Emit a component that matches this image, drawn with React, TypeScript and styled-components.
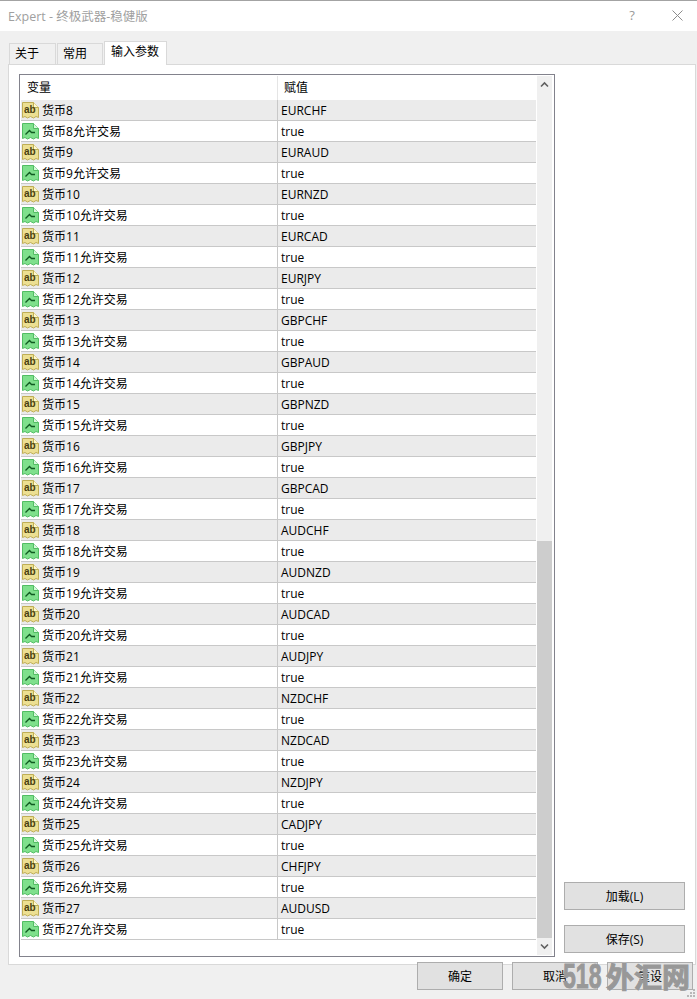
import React from 'react'
import styled, { createGlobalStyle } from 'styled-components'

const GlobalStyle = createGlobalStyle`
  html, body {
    margin: 0;
    padding: 0;
    background: #f0f0f0;
  }
  * {
    box-sizing: border-box;
  }
`

const FONT = `"Open Sans", "Noto Sans CJK SC", sans-serif`

const Dialog = styled.div`
  position: relative;
  width: 697px;
  height: 999px;
  overflow: hidden;
  background: #f0f0f0;
  color: #000;
  font-family: ${FONT};
  font-size: 12px;
`
const TitleBar = styled.div`
  height: 31px;
  background: #fff;
  border-top: 1px solid #a3a3a3;
  display: flex;
  align-items: center;
  padding: 0 14px 2px 8px;
  color: #a0a0a0;
  font-size: 12.5px;
`
const TitleText = styled.div`
  flex: 1;
`
const TitleHelp = styled.div`
  width: 10px;
  margin-right: 35px;
  font-size: 13px;
  color: #9a9a9a;
  text-align: center;
`
const Tabs = styled.div`
  display: flex;
  align-items: flex-end;
  height: 34px;
  padding-left: 9px;
  margin-bottom: -1px;
  position: relative;
`
const Tab = styled.div<{ $active?: boolean; $width: number }>`
  width: ${(p) => p.$width}px;
  height: ${(p) => (p.$active ? 24 : 22)}px;
  margin-right: 1px;
  padding-left: ${(p) => (p.$active ? 6 : 5)}px;
  padding-top: 1px;
  line-height: 18px;
  background: ${(p) => (p.$active ? '#fff' : '#f0f0f0')};
  border: 1px solid #d9d9d9;
  border-bottom: ${(p) => (p.$active ? 'none' : '1px solid #d9d9d9')};
  position: relative;
  z-index: ${(p) => (p.$active ? 1 : 0)};
`
const Panel = styled.div`
  width: 688px;
  height: 901px;
  margin-left: 8px;
  background: #fff;
  border: 1px solid #d9d9d9;
  padding: 9px 10px;
  display: flex;
  align-items: flex-start;
  gap: 9px;
`
const ListBox = styled.div`
  width: 536px;
  height: 883px;
  border: 1px solid #82828c;
  padding: 1px 2px 1px 1px;
  display: flex;
  background: #fff;
`
const Table = styled.div`
  width: 516px;
  display: flex;
  flex-direction: column;
`
const Header = styled.div`
  height: 24px;
  flex: none;
  display: grid;
  grid-template-columns: 257px 1fr;
  line-height: 23px;
`
const HeaderCell = styled.div<{ $first?: boolean }>`
  padding-left: 6px;
  border-right: ${(p) => (p.$first ? '1px solid #e5e5e5' : 'none')};
`
const Row = styled.div<{ $odd: boolean }>`
  height: 21px;
  flex: none;
  display: grid;
  grid-template-columns: 257px 1fr;
  background: ${(p) => (p.$odd ? '#ebebeb' : '#fff')};
  border-bottom: 1px solid #c8c8c8;
`
const NameCell = styled.div`
  display: flex;
  align-items: flex-start;
  padding: 1px 0 0 1px;
  gap: 3px;
  border-right: 1px solid #c8c8c8;
  line-height: 19px;
`
const ValueCell = styled.div`
  padding: 1px 0 0 3px;
  line-height: 19px;
`
const IconSvg = styled.svg`
  width: 17px;
  height: 17px;
  margin-top: 1px;
  flex: none;
`
const AbLabel = styled.text`
  font-family: "Liberation Sans", sans-serif;
  font-size: 10px;
  font-weight: 700;
  fill: #4a3f10;
`
const ScrollBar = styled.div`
  width: 15px;
  margin-left: 1px;
  display: flex;
  flex-direction: column;
  background: #f0f0f0;
`
const ScrollButton = styled.div`
  height: 17px;
  flex: none;
  display: flex;
  align-items: center;
  justify-content: center;
`
const ScrollTrack = styled.div`
  flex: 1;
  display: flex;
  flex-direction: column;
  justify-content: flex-end;
`
const ScrollThumb = styled.div`
  height: 397px;
  background: #cdcdcd;
`
const SideButtons = styled.div`
  width: 121px;
  height: 879px;
  display: flex;
  flex-direction: column;
  justify-content: flex-end;
  gap: 15px;
`
const Button = styled.div<{ $width: number }>`
  width: ${(p) => p.$width}px;
  height: 28px;
  flex: none;
  background: #e1e1e1;
  border: 1px solid #adadad;
  display: flex;
  align-items: center;
  justify-content: center;
`
const Footer = styled.div`
  display: flex;
  gap: 9px;
  margin-top: -3px;
  padding-left: 417px;
  position: relative;
`
const Watermark = styled.div`
  position: absolute;
  left: 563px;
  top: 958px;
  display: flex;
  align-items: center;
  height: 36px;
  font-family: "Noto Sans CJK SC", "Liberation Sans", sans-serif;
  font-size: 28px;
  font-weight: 700;
  color: #989898;
  -webkit-text-stroke: 1px #989898;
  text-shadow: 0 0 2px rgba(255, 255, 255, 0.8);
  white-space: nowrap;
`
const WatermarkDigits = styled.span`
  display: inline-block;
  width: 43px;
  font-family: "Liberation Sans", sans-serif;
  font-size: 35px;
  transform: scaleX(0.66);
  transform-origin: left center;
`
const Grip = styled.svg`
  position: absolute;
  right: 1px;
  bottom: 1px;
  width: 11px;
  height: 11px;
`

const pairs: [number, string][] = [
  [8, 'EURCHF'], [9, 'EURAUD'], [10, 'EURNZD'], [11, 'EURCAD'], [12, 'EURJPY'],
  [13, 'GBPCHF'], [14, 'GBPAUD'], [15, 'GBPNZD'], [16, 'GBPJPY'], [17, 'GBPCAD'],
  [18, 'AUDCHF'], [19, 'AUDNZD'], [20, 'AUDCAD'], [21, 'AUDJPY'], [22, 'NZDCHF'],
  [23, 'NZDCAD'], [24, 'NZDJPY'], [25, 'CADJPY'], [26, 'CHFJPY'], [27, 'AUDUSD'],
]

const PAGE = 'M0.5 0.5H11.5L16.5 5.5V15.5L14 14.5L11.5 16L8.5 14.5L5.5 16L3 14.5L0.5 15.5Z'

const TextIcon = () => (
  <IconSvg viewBox="0 0 17 17">
    <path d={PAGE} fill="#ecdf92" stroke="#bfae55" />
    <path d="M11.5 0.5V5.5H16.5" fill="#fff8d0" stroke="#bfae55" />
    <AbLabel x="2" y="11">ab</AbLabel>
  </IconSvg>
)

const BoolIcon = () => (
  <IconSvg viewBox="0 0 17 17">
    <path d={PAGE} fill="#7fe08c" stroke="#52bd63" />
    <path d="M11.5 0.5V5.5H16.5" fill="#d8f8dc" stroke="#52bd63" />
    <path d="M3.5 11.5L7.5 7.5L9.5 9.5H13" fill="none" stroke="#0f5a20" strokeWidth="1.3" />
  </IconSvg>
)

export default function App() {
  return (
    <Dialog>
      <GlobalStyle />
      <TitleBar>
        <TitleText>Expert - 终极武器-稳健版</TitleText>
        <TitleHelp>?</TitleHelp>
        <svg width="11" height="11" viewBox="0 0 11 11">
          <path d="M0.5 0.5L10.5 10.5M10.5 0.5L0.5 10.5" stroke="#8c8c8c" fill="none" />
        </svg>
      </TitleBar>
      <Tabs>
        <Tab $width={47}>关于</Tab>
        <Tab $width={46}>常用</Tab>
        <Tab $active $width={63}>输入参数</Tab>
      </Tabs>
      <Panel>
        <ListBox>
          <Table>
            <Header>
              <HeaderCell $first>变量</HeaderCell>
              <HeaderCell>赋值</HeaderCell>
            </Header>
            {pairs.map(([n, code]) => (
              <React.Fragment key={n}>
                <Row $odd>
                  <NameCell><TextIcon />货币{n}</NameCell>
                  <ValueCell>{code}</ValueCell>
                </Row>
                <Row $odd={false}>
                  <NameCell><BoolIcon />货币{n}允许交易</NameCell>
                  <ValueCell>true</ValueCell>
                </Row>
              </React.Fragment>
            ))}
          </Table>
          <ScrollBar>
            <ScrollButton>
              <svg width="9" height="7" viewBox="0 0 9 7">
                <path d="M1 5.5L4.5 2L8 5.5" fill="none" stroke="#606060" strokeWidth="1.6" />
              </svg>
            </ScrollButton>
            <ScrollTrack>
              <ScrollThumb />
            </ScrollTrack>
            <ScrollButton>
              <svg width="9" height="7" viewBox="0 0 9 7">
                <path d="M1 1.5L4.5 5L8 1.5" fill="none" stroke="#606060" strokeWidth="1.6" />
              </svg>
            </ScrollButton>
          </ScrollBar>
        </ListBox>
        <SideButtons>
          <Button $width={121}>加载(L)</Button>
          <Button $width={121}>保存(S)</Button>
        </SideButtons>
      </Panel>
      <Footer>
        <Button $width={86}>确定</Button>
        <Button $width={86}>取消</Button>
        <Button $width={86}>重设</Button>
      </Footer>
      <Watermark><WatermarkDigits>518</WatermarkDigits>外汇网</Watermark>
      <Grip viewBox="0 0 11 11">
        <path d="M8 2h2v2H8zM5 5h2v2H5zM8 5h2v2H8zM2 8h2v2H2zM5 8h2v2H5zM8 8h2v2H8z" fill="#b8b8b8" />
      </Grip>
    </Dialog>
  )
}
